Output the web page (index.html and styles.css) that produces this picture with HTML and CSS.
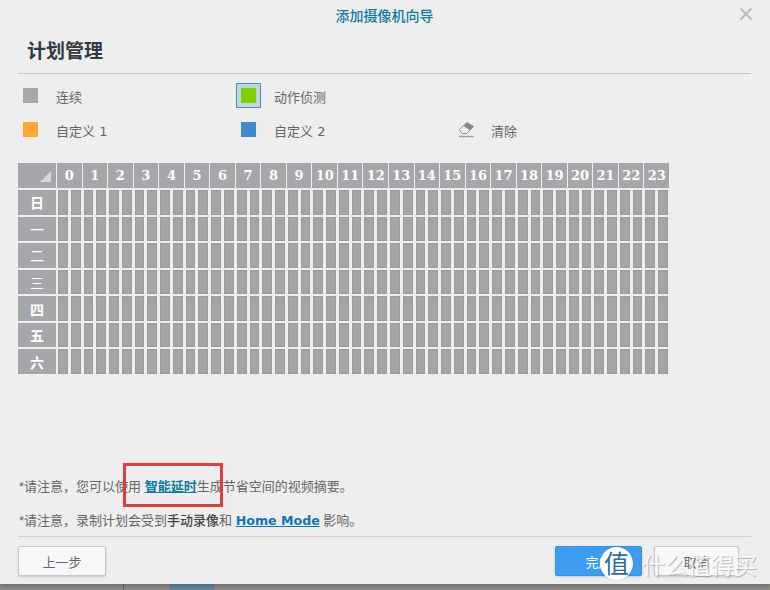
FILE: index.html
```html
<!DOCTYPE html>
<html lang="zh-CN">
<head>
    <meta charset="UTF-8">
    <title>添加摄像机向导</title>
    <link rel="stylesheet" href="styles.css">
</head>
<body>

<div class="backdrop">
    <span class="backdrop-line"></span>
    <span class="backdrop-thumb"></span>
</div>

<div class="dialog">
    <div class="dialog-title">添加摄像机向导</div>
    <svg class="close-icon" width="14" height="14" viewBox="0 0 14 14">
        <path d="M1.5 1.5 L12.5 12.5 M12.5 1.5 L1.5 12.5" stroke="#b9bcbf" stroke-width="2" fill="none"/>
    </svg>

    <h1 class="page-title">计划管理</h1>

    <div class="legend">
        <div class="legend-item"><span class="swatch swatch-grey"></span>连续</div>
        <div class="legend-item"><span class="swatch swatch-green"></span>动作侦测</div>
        <div class="legend-item"></div>
        <div class="legend-item"><span class="swatch swatch-orange"></span>自定义 1</div>
        <div class="legend-item"><span class="swatch swatch-blue"></span>自定义 2</div>
        <div class="legend-item">
            <svg class="eraser" width="17" height="17" viewBox="0 0 17 17">
                <path d="M1.5 8.5 L9 1.5 L15.5 5.5 L8.5 12.5 L4 12.5 Z" fill="#f6f6f6" stroke="#8b8d90" stroke-width="1"/>
                <path d="M5.5 5.2 L9 1.5 L15.5 5.5 L12 9.2 Z" fill="#85888b"/>
                <path d="M1 15.5 H16" stroke="#9a9c9f" stroke-width="1.4"/>
            </svg>
            清除
        </div>
    </div>

    <div class="schedule" id="schedule"></div>

    <div class="notes">
        <p>*请注意，您可以使用 <a href="#" class="note-link">智能延时</a>生成节省空间的视频摘要。</p>
        <p>*请注意，录制计划会受到<b>手动录像</b>和 <a href="#" class="note-link note-latin">Home Mode</a> 影响。</p>
    </div>

    <div class="footer">
        <button class="btn">上一步</button>
        <div class="footer-right">
            <button class="btn btn-primary">完成</button>
            <button class="btn btn-cancel">取消</button>
        </div>
    </div>
</div>

<div class="red-box"></div>

<div class="watermark">
    <span class="watermark-badge">值</span>
    <span class="watermark-text">什么值得买</span>
</div>

<script src="schedule.js"></script>

</body>
</html>
```

FILE: styles.css
```css
body {
    margin: 0;
    width: 770px;
    height: 590px;
    overflow: hidden;
    position: relative;
    font-family: "DejaVu Sans", "Noto Sans CJK SC", sans-serif;
    font-size: 13px;
    color: #666;
    background: #8f8c88;
}

.backdrop-line {
    position: absolute;
    left: 123px;
    top: 584px;
    width: 1px;
    height: 6px;
    background: #6c6a68;
}

.backdrop-thumb {
    position: absolute;
    left: 170px;
    top: 584px;
    width: 44px;
    height: 6px;
    background: #5f8ba3;
}

.dialog {
    position: relative;
    box-sizing: border-box;
    height: 584px;
    padding: 0 19px 8px 18px;
    display: flex;
    flex-direction: column;
    background: #eeeeee;
    box-shadow: 0 2px 5px rgba(0, 0, 0, 0.25);
}

.dialog-title {
    height: 32px;
    line-height: 32px;
    text-align: center;
    font-size: 14px;
    font-weight: 500;
    color: #0e7ba3;
}

.close-icon {
    position: absolute;
    right: 17px;
    top: 7px;
}

.page-title {
    margin: 0;
    height: 41px;
    padding-left: 9px;
    line-height: 38px;
    font-size: 19px;
    font-weight: 700;
    color: #323b43;
    border-bottom: 1px solid #c8c8c8;
}

.legend {
    display: grid;
    grid-template-columns: 218px 217px 1fr;
    grid-auto-rows: 34px;
    padding: 5px 0 0 5px;
    height: 84px;
}

.legend-item {
    display: flex;
    align-items: center;
}

.swatch {
    width: 15px;
    height: 15px;
    margin-right: 18px;
    margin-bottom: 2px;
    flex: none;
}

.swatch-grey { background: #a8a8a8; }
.swatch-orange { background: #ffa733; }
.swatch-blue { background: #428bca; }

.swatch-green {
    background: #7ed000;
    box-shadow: 0 0 0 4px #bcd6e2, 0 0 0 5px #4d90b8;
}

.eraser {
    margin-right: 16px;
    margin-bottom: 2px;
    flex: none;
}

.schedule {
    display: grid;
    width: 651px;
    grid-template-columns: 38px repeat(24, 1fr);
    grid-template-rows: 25px repeat(7, 1fr);
    gap: 2px 1px;
    height: 211px;
}

.head-cell {
    display: flex;
    align-items: center;
    justify-content: center;
    background: #a5a7aa;
    color: #fff;
    font-weight: 700;
}

.hour {
    font-family: "DejaVu Serif", serif;
    font-size: 13px;
}

.day {
    font-family: "Noto Sans CJK SC", sans-serif;
    font-size: 14px;
    line-height: 22px;
}

.day-thin {
    font-weight: 400;
}

.corner {
    justify-content: flex-end;
    align-items: flex-end;
    padding: 0 5px 6px 0;
}

.corner-mark {
    width: 0;
    height: 0;
    border-left: 11px solid transparent;
    border-bottom: 11px solid #d8d9db;
}

.hour-slots {
    display: flex;
    gap: 3px;
    padding: 0 1px;
}

.slot {
    flex: 1;
    background: #a5a5a5;
    border: 1px solid #9b9b9b;
}

.notes {
    margin-top: auto;
    padding-left: 1px;
    font-family: "Liberation Sans", "Noto Sans CJK SC", sans-serif;
}

.notes p {
    margin: 0;
    height: 34px;
    line-height: 36px;
}

.notes b {
    font-weight: 500;
    color: #444;
}

.note-link {
    color: #0e7ba3;
    font-weight: 700;
}

.note-latin {
    font-family: "DejaVu Sans", sans-serif;
    font-size: 12.6px;
    color: #0f76b5;
}

.footer {
    display: flex;
    justify-content: space-between;
    align-items: flex-start;
    border-top: 1px solid #d2d2d2;
    padding-top: 9px;
    margin-top: -1px;
    height: 30px;
}

.footer-right {
    display: flex;
    gap: 12px;
    padding-right: 12px;
}

.btn {
    width: 88px;
    height: 30px;
    padding: 0;
    font: inherit;
    color: #666;
    background: #f6f7f9;
    border: 1px solid #c6c8cb;
    border-radius: 2px;
    box-shadow: 0 1px 2px rgba(0, 0, 0, 0.15);
}

.btn-primary {
    width: 87px;
    color: #fff;
    background: #3d9df0;
    border-color: #3a90dc;
}

.btn-cancel {
    width: 85px;
}

.red-box {
    position: absolute;
    left: 123px;
    top: 463px;
    width: 94px;
    height: 38px;
    border: 3px solid #d9403f;
}

.watermark {
    position: absolute;
    left: 600px;
    top: 547px;
    display: flex;
    align-items: center;
    gap: 9px;
}

.watermark-badge {
    width: 33px;
    height: 33px;
    line-height: 31px;
    border-radius: 50%;
    text-align: center;
    background: #fff;
    color: #2b6f9f;
    font-family: "Noto Sans CJK SC", sans-serif;
    font-size: 25px;
    box-shadow: 0 0 2px rgba(0, 0, 0, 0.2);
}

.watermark-text {
    font-family: "Noto Sans CJK SC", sans-serif;
    font-size: 23px;
    line-height: 32px;
    color: rgba(255, 255, 255, 0.85);
    text-shadow: 1px 1px 1px rgba(0, 0, 0, 0.25);
    white-space: nowrap;
}
```

FILE: schedule.js
```js
let schedule = document.getElementById('schedule');
let days = ['日', '一', '二', '三', '四', '五', '六'];

function addCell(className, text) {
    let cell = document.createElement('div');
    cell.className = className;
    cell.innerText = text || '';
    schedule.appendChild(cell);
    return cell;
}

let corner = addCell('head-cell corner');
corner.innerHTML = '<span class="corner-mark"></span>';

for (let h = 0; h < 24; h++) {
    addCell('head-cell hour', String(h));
}

days.forEach(day => {
    // the line-only characters are thin in the original font
    let thin = '一二三'.includes(day) ? ' day-thin' : '';
    addCell('head-cell day' + thin, day);
    for (let h = 0; h < 24; h++) {
        let cell = addCell('hour-slots');
        cell.innerHTML = '<span class="slot"></span><span class="slot"></span>';
    }
});
```
